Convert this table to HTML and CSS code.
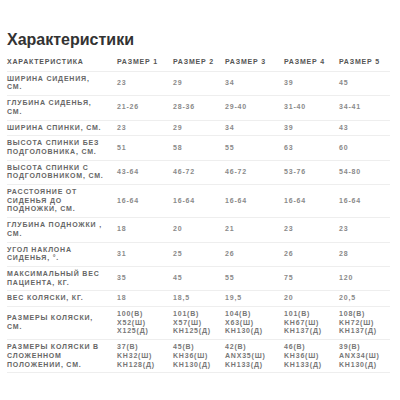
FILE: index.html
```html
<!DOCTYPE html>
<html lang="ru">
<head>
<meta charset="utf-8">
<link rel="stylesheet" href="styles.css">
</head>
<body>
<div class="page">
  <h2 class="title">Характеристики</h2>
  <table class="specs">
    <colgroup>
      <col class="c-label"><col class="c1"><col class="c2"><col class="c3"><col class="c4"><col class="c5">
    </colgroup>
    <thead>
      <tr><th>Характеристика</th><th>Размер 1</th><th>Размер 2</th><th>Размер 3</th><th>Размер 4</th><th>Размер 5</th></tr>
    </thead>
    <tbody>
      <tr><th>Ширина сидения, см.</th><td>23</td><td>29</td><td>34</td><td>39</td><td>45</td></tr>
      <tr><th>Глубина сиденья, см.</th><td>21-26</td><td>28-36</td><td>29-40</td><td>31-40</td><td>34-41</td></tr>
      <tr><th>Ширина спинки, см.</th><td>23</td><td>29</td><td>34</td><td>39</td><td>43</td></tr>
      <tr><th>Высота спинки без подголовника, см.</th><td>51</td><td>58</td><td>55</td><td>63</td><td>60</td></tr>
      <tr><th>Высота спинки с подголовником, см.</th><td>43-64</td><td>46-72</td><td>46-72</td><td>53-76</td><td>54-80</td></tr>
      <tr><th>Расстояние от сиденья до подножки, см.</th><td>16-64</td><td>16-64</td><td>16-64</td><td>16-64</td><td>16-64</td></tr>
      <tr><th>Глубина подножки , см.</th><td>18</td><td>20</td><td>21</td><td>23</td><td>23</td></tr>
      <tr><th>Угол наклона сиденья, °.</th><td>31</td><td>25</td><td>26</td><td>26</td><td>28</td></tr>
      <tr><th>Максимальный вес пациента, кг.</th><td>35</td><td>45</td><td>55</td><td>75</td><td>120</td></tr>
      <tr><th>Вес коляски, кг.</th><td>18</td><td>18,5</td><td>19,5</td><td>20</td><td>20,5</td></tr>
      <tr><th>Размеры коляски, см.</th><td class="dark">100(В)<br>X52(Ш)<br>X125(Д)</td><td class="dark">101(В)<br>X57(Ш)<br>KH125(Д)</td><td class="dark">104(В)<br>X63(Ш)<br>KH130(Д)</td><td class="dark">101(В)<br>KH67(Ш)<br>KH137(Д)</td><td class="dark">108(В)<br>KH72(Ш)<br>KH137(Д)</td></tr>
      <tr><th>Размеры коляски в сложенном положении, см.</th><td class="dark">37(В)<br>KH32(Ш)<br>KH128(Д)</td><td class="dark">45(В)<br>KH36(Ш)<br>KH130(Д)</td><td class="dark">42(В)<br>ANX35(Ш)<br>KH133(Д)</td><td class="dark">46(В)<br>KH36(Ш)<br>KH133(Д)</td><td class="dark">39(В)<br>ANX34(Ш)<br>KH130(Д)</td></tr>
    </tbody>
  </table>
</div>
</body>
</html>
```
FILE: styles.css
```css
html, body {
  margin: 0;
  padding: 0;
  background: #ffffff;
}
.page {
  padding: 31px 10px 0 7px;
  font-family: "Liberation Sans", Arial, sans-serif;
}
.title {
  margin: 0 0 5px 0;
  font-size: 16px;
  line-height: 18px;
  font-weight: bold;
  color: #333333;
}
.specs {
  width: 383px;
  table-layout: fixed;
  border-collapse: collapse;
  font-size: 7px;
  letter-spacing: 0.8px;
  text-transform: uppercase;
}
.c-label { width: 110px; }
.c1 { width: 56px; }
.c2 { width: 52px; }
.c3 { width: 59px; }
.c4 { width: 55px; }
.c5 { width: 51px; }
.specs th,
.specs td {
  text-align: left;
  vertical-align: middle;
  padding: 3px 4px 3px 0;
  line-height: 8.7px;
  border-bottom: 1px solid #eeeeee;
}
.specs tbody th {
  padding-right: 11px;
}
.specs thead th {
  color: #555555;
  font-weight: bold;
  padding-top: 4px;
  padding-bottom: 4px;
}
.specs tbody th {
  color: #666666;
  font-weight: bold;
}
.specs td {
  color: #8a8a8a;
  font-weight: bold;
}
.specs td.dark {
  color: #777777;
}
```
